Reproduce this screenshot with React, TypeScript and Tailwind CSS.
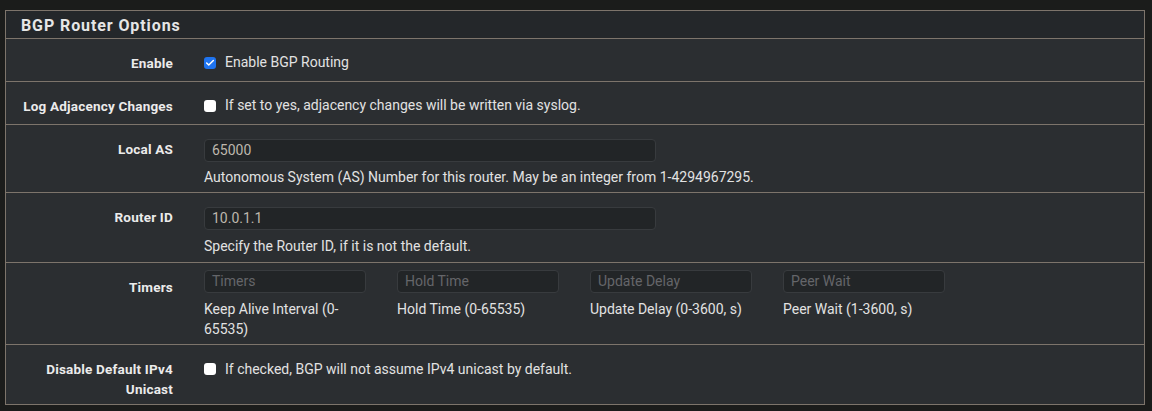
import { Check } from "lucide-react";

function Box({ checked }: { checked?: boolean }) {
  return checked ? (
    <span className="flex h-[12px] w-[12px] shrink-0 items-center justify-center rounded-[3px] bg-[#1f74f0]">
      <Check className="h-[10px] w-[10px] text-white" strokeWidth={3.5} />
    </span>
  ) : (
    <span className="h-[12px] w-[12px] shrink-0 rounded-[3px] bg-white" />
  );
}

function Label({ children }: { children: React.ReactNode }) {
  return (
    <div className="w-[167px] shrink-0 pt-[14px] text-right text-[13.5px] font-bold leading-5 tracking-[0.2px] text-[#ebebeb]">
      {children}
    </div>
  );
}

function TextInput({ value, placeholder, width }: { value?: string; placeholder?: string; width: string }) {
  return (
    <div
      className={`${width} flex h-[23px] items-center rounded-[4px] border border-[#383b3e] bg-[#222527] px-[7px] text-[14px] ${
        value ? "text-[#bdb7ad]" : "text-[#65666a]"
      }`}
    >
      {value || placeholder}
    </div>
  );
}

const timers = [
  { ph: "Timers", help: "Keep Alive Interval (0-65535)" },
  { ph: "Hold Time", help: "Hold Time (0-65535)" },
  { ph: "Update Delay", help: "Update Delay (0-3600, s)" },
  { ph: "Peer Wait", help: "Peer Wait (1-3600, s)" },
];

export default function App() {
  return (
    <div
      className="h-[411px] w-[1152px] bg-[#1b1c1b] pl-[5px] pr-[7px] pt-[10px]"
      style={{ fontFamily: "Roboto, 'Liberation Sans', sans-serif" }}
    >
      <div className="border border-[#7d746b] bg-[#2b2e31]">
        <div className="flex h-[27px] items-center bg-[#24272a] pl-[15px] pt-[2px] text-[16px] font-bold tracking-[0.9px] text-[#e6e6e6]">
          BGP Router Options
        </div>

        <div className="flex h-[43px] gap-[31px] border-t border-[#7d746b]">
          <Label>Enable</Label>
          <div className="flex items-center gap-[9px] pt-[5px] text-[14px] text-[#e2e2e2]">
            <Box checked />
            Enable BGP Routing
          </div>
        </div>

        <div className="flex h-[43px] gap-[31px] border-t border-[#7d746b]">
          <Label>Log Adjacency Changes</Label>
          <div className="flex items-center gap-[9px] pt-[5px] text-[14px] text-[#e2e2e2]">
            <Box />
            If set to yes, adjacency changes will be written via syslog.
          </div>
        </div>

        <div className="flex h-[68px] gap-[31px] border-t border-[#7d746b]">
          <Label>Local AS</Label>
          <div className="pt-[14px]">
            <TextInput value="65000" width="w-[452px]" />
            <p className="mt-[5px] text-[14px] leading-5 text-[#e2e2e2]">
              Autonomous System (AS) Number for this router. May be an integer from 1-4294967295.
            </p>
          </div>
        </div>

        <div className="flex h-[70px] gap-[31px] border-t border-[#7d746b]">
          <Label>Router ID</Label>
          <div className="pt-[14px]">
            <TextInput value="10.0.1.1" width="w-[452px]" />
            <p className="mt-[6px] text-[14px] leading-5 text-[#e2e2e2]">
              Specify the Router ID, if it is not the default.
            </p>
          </div>
        </div>

        <div className="flex h-[82px] gap-[31px] border-t border-[#7d746b]">
          <Label>Timers</Label>
          <div className="flex gap-[31px] pt-[7px]">
            {timers.map((t) => (
              <div key={t.ph} className="w-[162px]">
                <TextInput placeholder={t.ph} width="w-[162px]" />
                <p className="mt-[6px] text-[14px] leading-5 text-[#e2e2e2]">{t.help}</p>
              </div>
            ))}
          </div>
        </div>

        <div className="flex h-[60px] gap-[31px] border-t border-[#7d746b]">
          <Label>
            Disable Default IPv4
            <br />
            Unicast
          </Label>
          <div className="flex h-[48px] items-center gap-[9px] text-[14px] text-[#e2e2e2]">
            <Box />
            If checked, BGP will not assume IPv4 unicast by default.
          </div>
        </div>
      </div>
    </div>
  );
}
